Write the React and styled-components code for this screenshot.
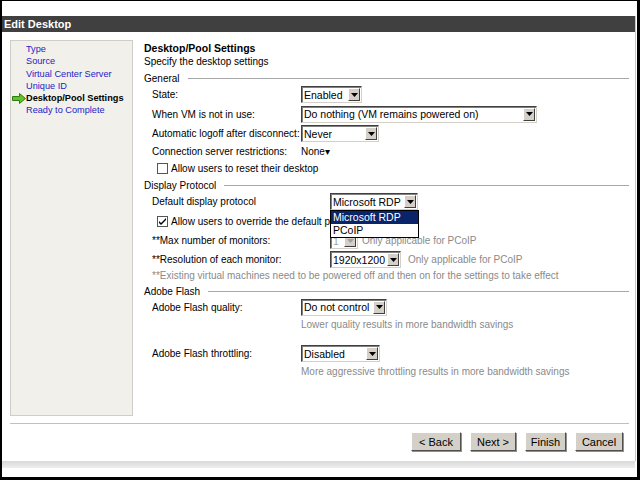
import React from "react";
import styled, { createGlobalStyle } from "styled-components";

const GlobalStyle = createGlobalStyle`
  html, body {
    margin: 0;
    padding: 0;
    background: #fff;
  }
  body {
    font-family: "Liberation Sans", Arial, sans-serif;
    font-size: 10px;
    color: #000;
  }
`;

const steps = [
  { label: "Type" },
  { label: "Source" },
  { label: "Virtual Center Server" },
  { label: "Unique ID" },
  { label: "Desktop/Pool Settings", current: true },
  { label: "Ready to Complete" },
];

const buttons = [
  { label: "< Back", width: 50 },
  { label: "Next >", width: 46 },
  { label: "Finish", width: 41 },
  { label: "Cancel", width: 48 },
];

function App() {
  return (
    <>
      <GlobalStyle />
      <Frame>
        <Dialog>
          <TitleBar>Edit Desktop</TitleBar>
          <Body>
            <Nav>
              {steps.map((s) => (
                <NavItem key={s.label} $current={s.current}>
                  {s.current && <GreenArrow />}
                  {s.label}
                </NavItem>
              ))}
            </Nav>

            <Content>
              <PageTitle>Desktop/Pool Settings</PageTitle>
              <PageSub>Specify the desktop settings</PageSub>

              <Legend>General</Legend>
              <Row $h={19}>
                <Label $w={149}>State:</Label>
                <Select width={61} value="Enabled" />
              </Row>
              <Row $h={20}>
                <Label $w={149}>When VM is not in use:</Label>
                <Select width={236} value="Do nothing (VM remains powered on)" />
              </Row>
              <Row $h={19}>
                <Label $w={149}>Automatic logoff after disconnect:</Label>
                <Select width={78} value="Never" />
              </Row>
              <Row $h={17}>
                <Label $w={149}>Connection server restrictions:</Label>
                <span>None&#9662;</span>
              </Row>
              <Row $h={17} $indent={5}>
                <Checkbox />
                <span>Allow users to reset their desktop</span>
              </Row>

              <Legend $top={1}>Display Protocol</Legend>
              <Row $h={19}>
                <Label $w={178}>Default display protocol</Label>
                <MenuAnchor>
                  <Select width={88} value="Microsoft RDP" />
                  <DropList>
                    <DropOption $selected>Microsoft RDP</DropOption>
                    <DropOption>PCoIP</DropOption>
                  </DropList>
                </MenuAnchor>
              </Row>
              <Row $h={20} $indent={5}>
                <Checkbox checked />
                <span>Allow users to override the default protocol</span>
              </Row>
              <Row $h={19}>
                <Label $w={178}>**Max number of monitors:</Label>
                <Select width={28} value="1" disabled />
                <Hint $left={4}>Only applicable for PCoIP</Hint>
              </Row>
              <Row $h={19}>
                <Label $w={178}>**Resolution of each monitor:</Label>
                <Select width={71} value="1920x1200" />
                <Hint $left={7}>Only applicable for PCoIP</Hint>
              </Row>
              <Row $h={13}>
                <Hint>
                  **Existing virtual machines need to be powered off and then on
                  for the settings to take effect
                </Hint>
              </Row>

              <Legend $top={2}>Adobe Flash</Legend>
              <Row $h={18}>
                <Label $w={149}>Adobe Flash quality:</Label>
                <Select width={86} value="Do not control" />
              </Row>
              <Row $h={16} $indent={149}>
                <Hint>Lower quality results in more bandwidth savings</Hint>
              </Row>
              <Row $h={21} $top={11}>
                <Label $w={149}>Adobe Flash throttling:</Label>
                <Select width={79} value="Disabled" />
              </Row>
              <Row $h={14} $indent={149}>
                <Hint>More aggressive throttling results in more bandwidth savings</Hint>
              </Row>
            </Content>
          </Body>

          <Footer>
            {buttons.map((b) => (
              <Button key={b.label} $w={b.width}>
                {b.label}
              </Button>
            ))}
          </Footer>
        </Dialog>
        <Shadow />
      </Frame>
    </>
  );
}

function Select({ width, value, disabled }) {
  return (
    <SelectBox style={{ width }} $disabled={disabled}>
      <SelectValue>{value}</SelectValue>
      <SelectArrow $disabled={disabled}>
        <svg width="7" height="4" viewBox="0 0 7 4">
          <path d="M0 0h7L3.5 4z" fill={disabled ? "#a0a0a0" : "#000"} />
        </svg>
      </SelectArrow>
    </SelectBox>
  );
}

function Checkbox({ checked }) {
  return (
    <CheckBoxBox>
      {checked && (
        <svg width="9" height="9" viewBox="0 0 9 9">
          <path d="M1 4l2 2 5-5v2L3 8 1 6z" fill="#000" />
        </svg>
      )}
    </CheckBoxBox>
  );
}

function GreenArrow() {
  return (
    <ArrowIcon width="15" height="11" viewBox="0 0 15 11">
      <path
        d="M0.5 3.5h7v-3l6 5-6 5v-3h-7z"
        fill="#5fc42a"
        stroke="#2f7a12"
        strokeWidth="1"
      />
    </ArrowIcon>
  );
}

const Frame = styled.div`
  position: relative;
  width: 640px;
  height: 480px;
  box-sizing: border-box;
  border-style: solid;
  border-color: #000;
  border-width: 1px 3px 3px 2px;
  background: #fff;
  padding-top: 15px;
  overflow: hidden;
`;

const Dialog = styled.div`
  width: 633px;
  height: 445px;
  border-right: 1px solid #c8c8c8;
  display: flex;
  flex-direction: column;
`;

const Shadow = styled.div`
  height: 7px;
  background: linear-gradient(#d8d8d8, #eeeeee);
  margin-right: 2px;
`;

const TitleBar = styled.div`
  height: 16px;
  background: #404040;
  color: #fff;
  font-weight: bold;
  font-size: 11px;
  line-height: 16px;
  padding-left: 2px;
`;

const Body = styled.div`
  display: flex;
  gap: 11px;
  padding: 8px 0 0 8px;
  height: 375px;
`;

const Nav = styled.div`
  flex-shrink: 0;
  background: #f1f0ea;
  border: 1px solid #cfcdc6;
  padding: 2px 0 0 15px;
  box-sizing: border-box;
  width: 123px;
  height: 376px;
`;

const NavItem = styled.div`
  position: relative;
  height: 12.3px;
  line-height: 12px;
  font-size: 9.2px;
  color: ${(p) => (p.$current ? "#000" : "#2323c8")};
  font-weight: ${(p) => (p.$current ? "bold" : "normal")};
  white-space: nowrap;
`;

const ArrowIcon = styled.svg`
  position: absolute;
  left: -14px;
  top: 1px;
`;

const Content = styled.div`
  flex: 1;
  padding-top: 1px;
  padding-right: 6px;
`;

const PageTitle = styled.div`
  font-weight: bold;
  font-size: 10.5px;
  line-height: 14px;
`;

const PageSub = styled.div`
  line-height: 14px;
  margin-bottom: 2px;
`;

const Legend = styled.div`
  display: flex;
  align-items: center;
  gap: 8px;
  height: 14px;
  margin-top: ${(p) => p.$top || 0}px;
  &::after {
    content: "";
    flex: 1;
    height: 1px;
    background: #a8a8a8;
  }
`;

const Row = styled.div`
  display: flex;
  align-items: center;
  height: ${(p) => p.$h}px;
  margin-top: ${(p) => p.$top || 0}px;
  padding-left: ${(p) => 8 + (p.$indent || 0)}px;
  white-space: nowrap;
`;

const Label = styled.div`
  width: ${(p) => p.$w}px;
  flex-shrink: 0;
`;

const Hint = styled.span`
  color: #8a8a8a;
  margin-left: ${(p) => p.$left || 0}px;
`;

const SelectBox = styled.div`
  height: 17px;
  box-sizing: border-box;
  display: flex;
  align-items: center;
  background: #fff;
  border-top: 1px solid #404040;
  border-left: 1px solid #404040;
  border-right: 1px solid #d4d0c8;
  border-bottom: 1px solid #d4d0c8;
  box-shadow: inset 1px 1px 0 #808080;
  color: ${(p) => (p.$disabled ? "#a0a0a0" : "#000")};
  font-size: 10.5px;
  flex-shrink: 0;
`;

const SelectValue = styled.span`
  flex: 1;
  padding-left: 2px;
  white-space: nowrap;
  overflow: hidden;
`;

const SelectArrow = styled.span`
  width: 12px;
  height: 13px;
  margin-right: 1px;
  flex-shrink: 0;
  box-sizing: border-box;
  background: #d4d0c8;
  border-top: 1px solid #fff;
  border-left: 1px solid #fff;
  border-right: 1px solid #404040;
  border-bottom: 1px solid #404040;
  display: flex;
  align-items: center;
  justify-content: center;
`;

const MenuAnchor = styled.div`
  position: relative;
`;

const DropList = styled.div`
  position: absolute;
  left: 0;
  top: 17px;
  width: 87px;
  background: #fff;
  border: 1px solid #000;
  z-index: 2;
  font-size: 10.5px;
`;

const DropOption = styled.div`
  height: 13px;
  line-height: 13px;
  padding-left: 2px;
  background: ${(p) => (p.$selected ? "#0a246a" : "#fff")};
  color: ${(p) => (p.$selected ? "#fff" : "#000")};
`;

const CheckBoxBox = styled.span`
  width: 11px;
  height: 11px;
  box-sizing: border-box;
  border: 1px solid #555;
  background: #fff;
  margin-right: 3px;
  display: flex;
  align-items: center;
  justify-content: center;
  flex-shrink: 0;
`;

const Footer = styled.div`
  margin: 8px 6px 0 8px;
  border-top: 1px solid #c0c0c0;
  display: flex;
  justify-content: flex-end;
  gap: 9px;
  padding: 8px 6px 0 0;
`;

const Button = styled.button`
  width: ${(p) => p.$w}px;
  height: 19px;
  padding: 0;
  background: #d4d0c8;
  border-top: 1px solid #fff;
  border-left: 1px solid #fff;
  border-right: 1px solid #505050;
  border-bottom: 1px solid #505050;
  box-shadow: 1px 1px 0 #909090;
  font-family: "Liberation Sans", Arial, sans-serif;
  font-size: 11px;
  color: #000;
`;

export default App;
